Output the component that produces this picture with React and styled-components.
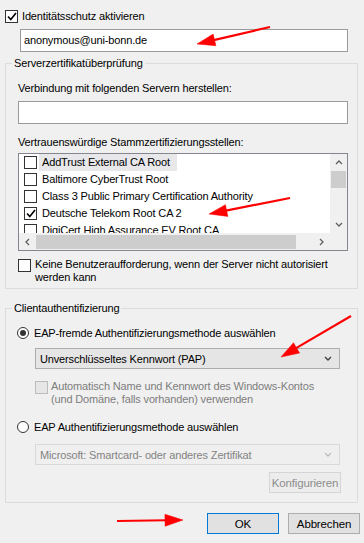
import React from 'react';
import styled, {createGlobalStyle} from 'styled-components';

const GlobalStyle = createGlobalStyle`
  html, body { margin: 0; padding: 0; background: #f0f0f0; }
  * { box-sizing: border-box; }
`;

const Page = styled.div`
  position: relative;
  width: 364px;
  height: 543px;
  overflow: hidden;
  background: #f0f0f0;
  font-family: "Liberation Sans", Arial, sans-serif;
  font-size: 11px;
  letter-spacing: -0.15px;
  color: #000;
  padding-top: 10px;
`;

const CheckRow = styled.div`
  display: flex;
  align-items: flex-start;
  gap: ${p => p.gap || 4}px;
  margin-left: ${p => p.left}px;
  margin-top: ${p => p.top || 0}px;
  line-height: 13px;
  color: ${p => (p.disabled ? '#7d7d7d' : '#000')};
`;

const Box = styled.span`
  flex: none;
  width: 13px;
  height: 13px;
  margin-top: ${p => p.offset || 0}px;
  border: 1px solid ${p => (p.disabled ? '#bcbcbc' : '#333')};
  background: ${p => (p.disabled ? '#e6e6e6' : '#fff')};
  display: flex;
  align-items: center;
  justify-content: center;
`;

const TextField = styled.div`
  margin-left: ${p => p.left}px;
  margin-top: ${p => p.top}px;
  width: ${p => p.width}px;
  height: 23px;
  border: 1px solid #9a9a9a;
  background: #fff;
  padding-left: 3px;
  line-height: 21px;
`;

const Group = styled.fieldset`
  margin: ${p => p.top}px 0 0 5px;
  width: 353px;
  padding: 0 0 ${p => p.bottom}px 0;
  border: 1px solid #dcdcdc;
  min-width: 0;
`;

const Legend = styled.legend`
  margin-left: 6px;
  padding: 0 2px;
  line-height: 16px;
`;

const Label = styled.div`
  margin-left: 12px;
  margin-top: ${p => p.top}px;
  line-height: 14px;
`;

const List = styled.div`
  margin: 4px 0 0 12px;
  width: 330px;
  height: 98px;
  border: 1px solid #828790;
  background: #fff;
  display: grid;
  grid-template-columns: 1fr 17px;
  grid-template-rows: 1fr 17px;
  overflow: hidden;
`;

const Items = styled.div`
  overflow: hidden;
`;

const Item = styled.div`
  height: 17px;
  display: flex;
  align-items: center;
  padding-left: 5px;
  gap: 2px;
  white-space: nowrap;
`;

const ItemText = styled.span`
  padding: 0 7px 0 3px;
  line-height: 17px;
  background: ${p => (p.hot ? '#e8e8ea' : 'transparent')};
`;

const VScroll = styled.div`
  background: #f0f0f0;
  display: flex;
  flex-direction: column;
  align-items: center;
`;

const HScroll = styled.div`
  background: #f0f0f0;
  display: flex;
  align-items: center;
`;

const ArrowCell = styled.div`
  flex: none;
  width: 17px;
  height: 17px;
  display: flex;
  align-items: center;
  justify-content: center;
`;

const VThumb = styled.div`
  width: 15px;
  height: 17px;
  background: #cdcdcd;
`;

const VTrack = styled.div`
  flex: 1;
`;

const HThumb = styled.div`
  width: 260px;
  height: 14px;
  background: #cdcdcd;
`;

const HTrack = styled.div`
  flex: 1;
`;

const Corner = styled.div`
  background: #f0f0f0;
`;

const RadioRow = styled.div`
  display: flex;
  align-items: center;
  gap: 5px;
  margin: ${p => p.top}px 0 0 11px;
  line-height: 14px;
`;

const Radio = styled.span`
  width: 12px;
  height: 12px;
  border-radius: 50%;
  border: 1px solid #333;
  background: #fff;
  display: flex;
  align-items: center;
  justify-content: center;
  &::after {
    content: '';
    width: 6px;
    height: 6px;
    border-radius: 50%;
    background: ${p => (p.checked ? '#333' : 'transparent')};
  }
`;

const Combo = styled.div`
  margin: ${p => p.top}px 0 0 29px;
  width: 305px;
  height: 21px;
  border: 1px solid ${p => (p.disabled ? '#d9d9d9' : '#adadad')};
  background: ${p => (p.disabled ? '#efefef' : '#e5e5e5')};
  color: ${p => (p.disabled ? '#838383' : '#000')};
  display: flex;
  align-items: center;
  justify-content: space-between;
  padding: 0 7px 0 4px;
`;

const Button = styled.div`
  width: 72px;
  height: 21px;
  border: 1px solid ${p => p.border || '#adadad'};
  background: ${p => p.bg || '#e1e1e1'};
  color: ${p => p.color || '#000'};
  display: flex;
  align-items: center;
  justify-content: center;
  font-size: 11.5px;
`;

const GroupFooter = styled.div`
  display: flex;
  justify-content: flex-end;
  margin: 7px 16px 0 0;
`;

const Footer = styled.div`
  display: flex;
  justify-content: flex-end;
  gap: 9px;
  margin-top: 10px;
  padding-right: 4px;
`;

const Overlay = styled.svg`
  position: absolute;
  left: 0;
  top: 0;
  pointer-events: none;
`;

const Check = () => (
  <svg width="10" height="9" viewBox="0 0 10 9">
    <path d="M1 4.5 L3.8 7.5 L9 1" fill="none" stroke="#000" strokeWidth="1.6" />
  </svg>
);

const Chevron = ({dir = 'down', color = '#606060'}) => {
  const pts = {
    down: '1,1 4,4 7,1',
    up: '1,4 4,1 7,4',
    left: '4,1 1,4 4,7',
    right: '1,1 4,4 1,7',
  }[dir];
  const w = dir === 'left' || dir === 'right' ? 6 : 8;
  const h = dir === 'left' || dir === 'right' ? 8 : 6;
  return (
    <svg width={w} height={h} viewBox={`0 0 ${w} ${h}`}>
      <polyline points={pts} fill="none" stroke={color} strokeWidth="1.3" />
    </svg>
  );
};

function Arrow({x1, y1, x2, y2}) {
  const dx = x2 - x1;
  const dy = y2 - y1;
  const len = Math.hypot(dx, dy);
  const ux = dx / len;
  const uy = dy / len;
  const bx = x2 - ux * 18;
  const by = y2 - uy * 18;
  const px = -uy * 6;
  const py = ux * 6;
  return (
    <g fill="#f00" stroke="#f00">
      <line x1={x1} y1={y1} x2={bx + ux * 2} y2={by + uy * 2} strokeWidth="2.2" />
      <polygon points={`${x2},${y2} ${bx + px},${by + py} ${bx - px},${by - py}`} strokeWidth="0.5" />
    </g>
  );
}

const certs = [
  {name: 'AddTrust External CA Root', hot: true},
  {name: 'Baltimore CyberTrust Root'},
  {name: 'Class 3 Public Primary Certification Authority'},
  {name: 'Deutsche Telekom Root CA 2', checked: true},
  {name: 'DigiCert High Assurance EV Root CA'},
];

export default function App() {
  return (
    <Page>
      <GlobalStyle />
      <CheckRow left={5}>
        <Box><Check /></Box>
        <span>Identitätsschutz aktivieren</span>
      </CheckRow>
      <TextField left={20} top={6} width={328}>anonymous@uni-bonn.de</TextField>

      <Group top={3} bottom={4}>
        <Legend>Serverzertifikatüberprüfung</Legend>
        <Label top={10}>Verbindung mit folgenden Servern herstellen:</Label>
        <TextField left={12} top={6} width={330} />
        <Label top={11}>Vertrauenswürdige Stammzertifizierungsstellen:</Label>
        <List>
          <Items>
            {certs.map(c => (
              <Item key={c.name}>
                <Box>{c.checked && <Check />}</Box>
                <ItemText hot={c.hot}>{c.name}</ItemText>
              </Item>
            ))}
          </Items>
          <VScroll>
            <ArrowCell><Chevron dir="up" /></ArrowCell>
            <VThumb />
            <VTrack />
            <ArrowCell><Chevron dir="down" /></ArrowCell>
          </VScroll>
          <HScroll>
            <ArrowCell><Chevron dir="left" /></ArrowCell>
            <HThumb />
            <HTrack />
            <ArrowCell><Chevron dir="right" /></ArrowCell>
          </HScroll>
          <Corner />
        </List>
        <CheckRow left={12} top={7}>
          <Box offset={1} />
          <span>Keine Benutzeraufforderung, wenn der Server nicht autorisiert<br />werden kann</span>
        </CheckRow>
      </Group>

      <Group top={11} bottom={9}>
        <Legend>Clientauthentifizierung</Legend>
        <RadioRow top={10}>
          <Radio checked />
          <span>EAP-fremde Authentifizierungsmethode auswählen</span>
        </RadioRow>
        <Combo top={8}>
          <span>Unverschlüsseltes Kennwort (PAP)</span>
          <Chevron color="#3c3c3c" />
        </Combo>
        <CheckRow left={29} top={11} gap={3} disabled>
          <Box offset={1} disabled />
          <span>Automatisch Name und Kennwort des Windows-Kontos<br />(und Domäne, falls vorhanden) verwenden</span>
        </CheckRow>
        <RadioRow top={14}>
          <Radio />
          <span>EAP Authentifizierungsmethode auswählen</span>
        </RadioRow>
        <Combo top={10} disabled>
          <span>Microsoft: Smartcard- oder anderes Zertifikat</span>
          <Chevron color="#bfbfbf" />
        </Combo>
        <GroupFooter>
          <Button border="#d5d5d5" bg="#ececec" color="#8d8d8d">Konfigurieren</Button>
        </GroupFooter>
      </Group>

      <Footer>
        <Button border="#0078d7">OK</Button>
        <Button>Abbrechen</Button>
      </Footer>

      <Overlay width="364" height="543">
        <Arrow x1={270} y1={27} x2={197} y2={44} />
        <Arrow x1={290} y1={198} x2={209} y2={214} />
        <Arrow x1={351} y1={316} x2={281} y2={357} />
        <Arrow x1={117} y1={521} x2={183} y2={520} />
      </Overlay>
    </Page>
  );
}
